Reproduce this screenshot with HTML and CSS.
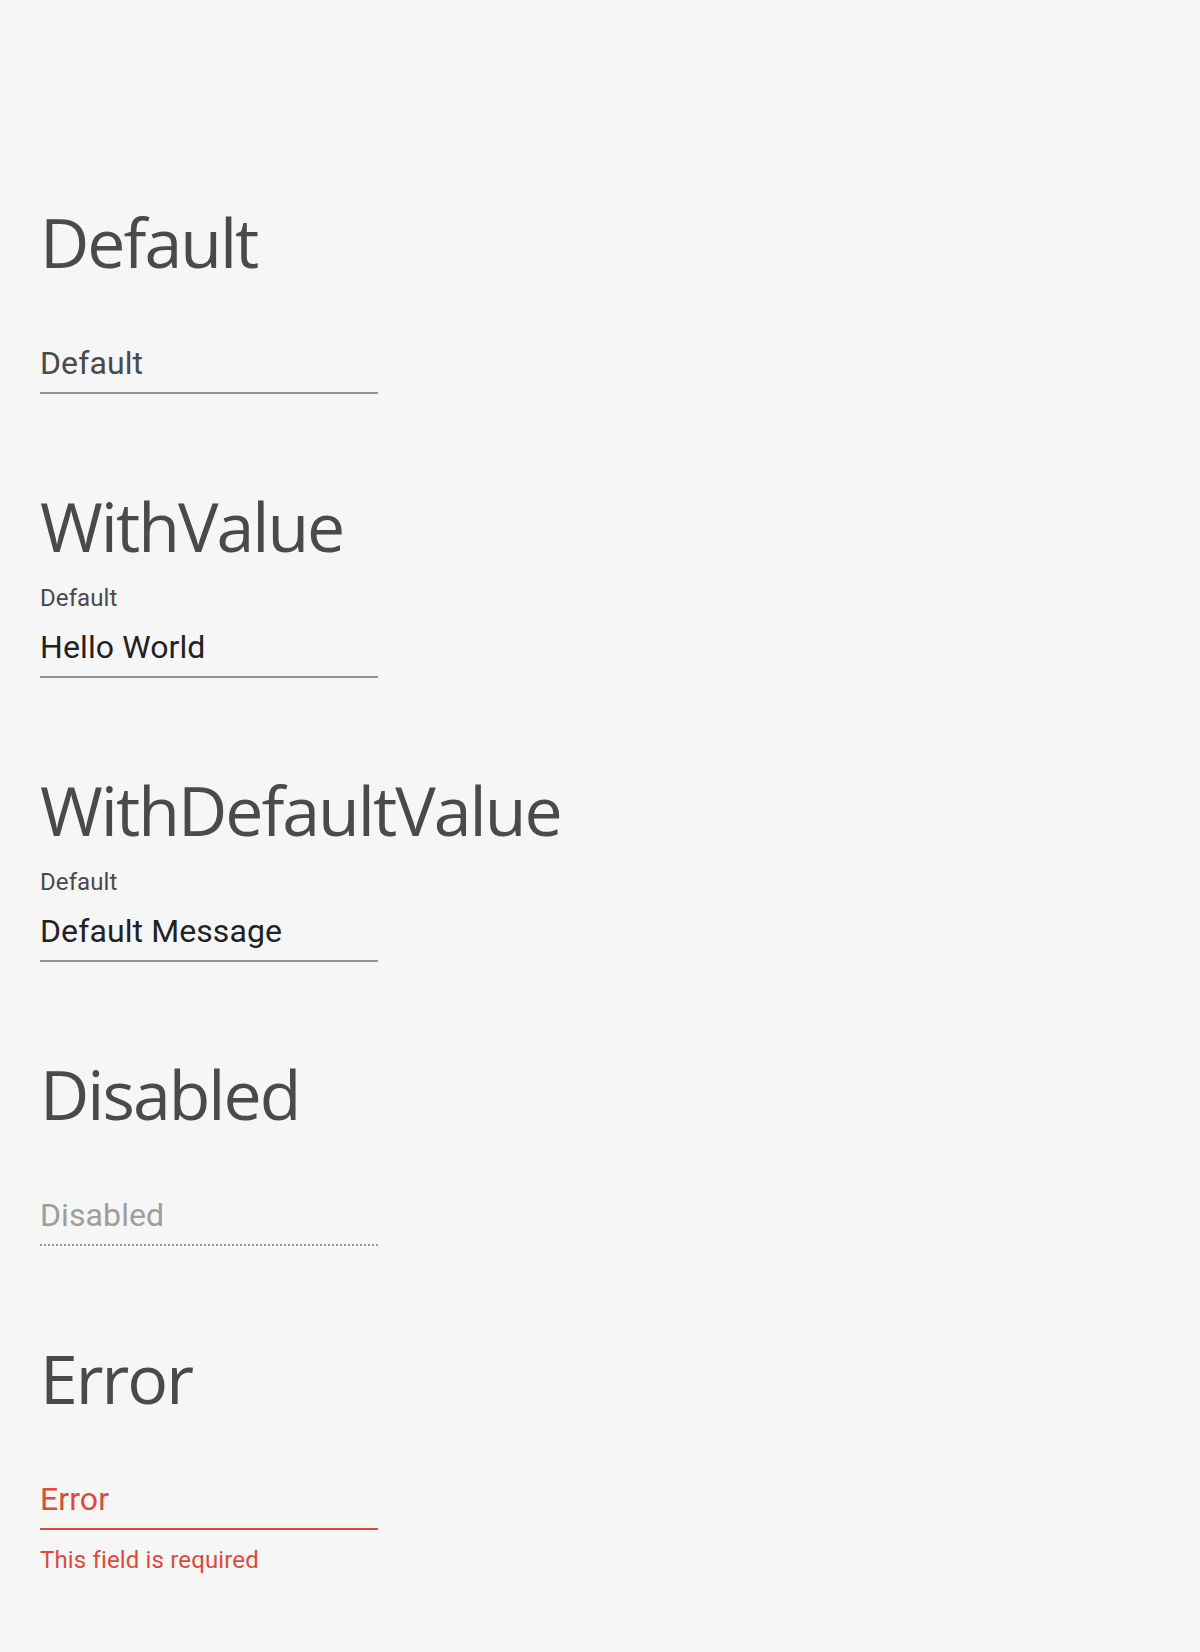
FILE: index.html
```html
<!DOCTYPE html>
<html lang="en">
<head>
<meta charset="utf-8">
<title>TextField</title>
<link rel="stylesheet" href="styles.css">
</head>
<body>
<main class="page">
  <section class="story">
    <h1 class="story-title">Default</h1>
    <div class="field">
      <div class="field-label is-empty">Default</div>
      <div class="field-input is-placeholder">Default</div>
    </div>
  </section>
  <section class="story">
    <h1 class="story-title">WithValue</h1>
    <div class="field">
      <div class="field-label">Default</div>
      <div class="field-input">Hello World</div>
    </div>
  </section>
  <section class="story">
    <h1 class="story-title">WithDefaultValue</h1>
    <div class="field">
      <div class="field-label">Default</div>
      <div class="field-input">Default Message</div>
    </div>
  </section>
  <section class="story">
    <h1 class="story-title">Disabled</h1>
    <div class="field is-disabled">
      <div class="field-label is-empty">Disabled</div>
      <div class="field-input is-placeholder">Disabled</div>
    </div>
  </section>
  <section class="story">
    <h1 class="story-title">Error</h1>
    <div class="field is-error">
      <div class="field-label is-empty">Error</div>
      <div class="field-input is-placeholder">Error</div>
      <div class="field-error">This field is required</div>
    </div>
  </section>
</main>
</body>
</html>
```
FILE: styles.css
```css
html, body {
  margin: 0;
  padding: 0;
  background: #f6f6f6;
}
.page {
  padding: 202px 40px 60px;
  display: flex;
  flex-direction: column;
  gap: 92px;
}
.story {
  display: flex;
  flex-direction: column;
  gap: 18px;
}
.story-title {
  margin: 0;
  font-family: "Open Sans", sans-serif;
  font-weight: 400;
  font-size: 68px;
  line-height: 80px;
  letter-spacing: -2px;
  color: #4a4a4a;
}
.field {
  width: 338px;
  font-family: Roboto, sans-serif;
  display: flex;
  flex-direction: column;
}
.field-label {
  font-size: 24px;
  line-height: 28px;
  height: 28px;
  letter-spacing: 0.1px;
  color: #4a4a4a;
}
.field-label.is-empty {
  visibility: hidden;
}
.field-input {
  margin-top: 15px;
  font-size: 32px;
  line-height: 40px;
  letter-spacing: 0.1px;
  padding-bottom: 9px;
  border-bottom: 2px solid #939393;
  color: #222;
}
.field-input.is-placeholder {
  color: #4a4a4a;
}
.is-disabled .field-input {
  color: #9e9e9e;
  border-bottom: 2px dotted #9a9a9a;
}
.is-error .field-input {
  color: #dc4a3c;
  border-bottom-color: #dc4a3c;
}
.field-error {
  margin-top: 16px;
  font-size: 24px;
  line-height: 28px;
  letter-spacing: 0.15px;
  color: #dc4a3c;
}
```
